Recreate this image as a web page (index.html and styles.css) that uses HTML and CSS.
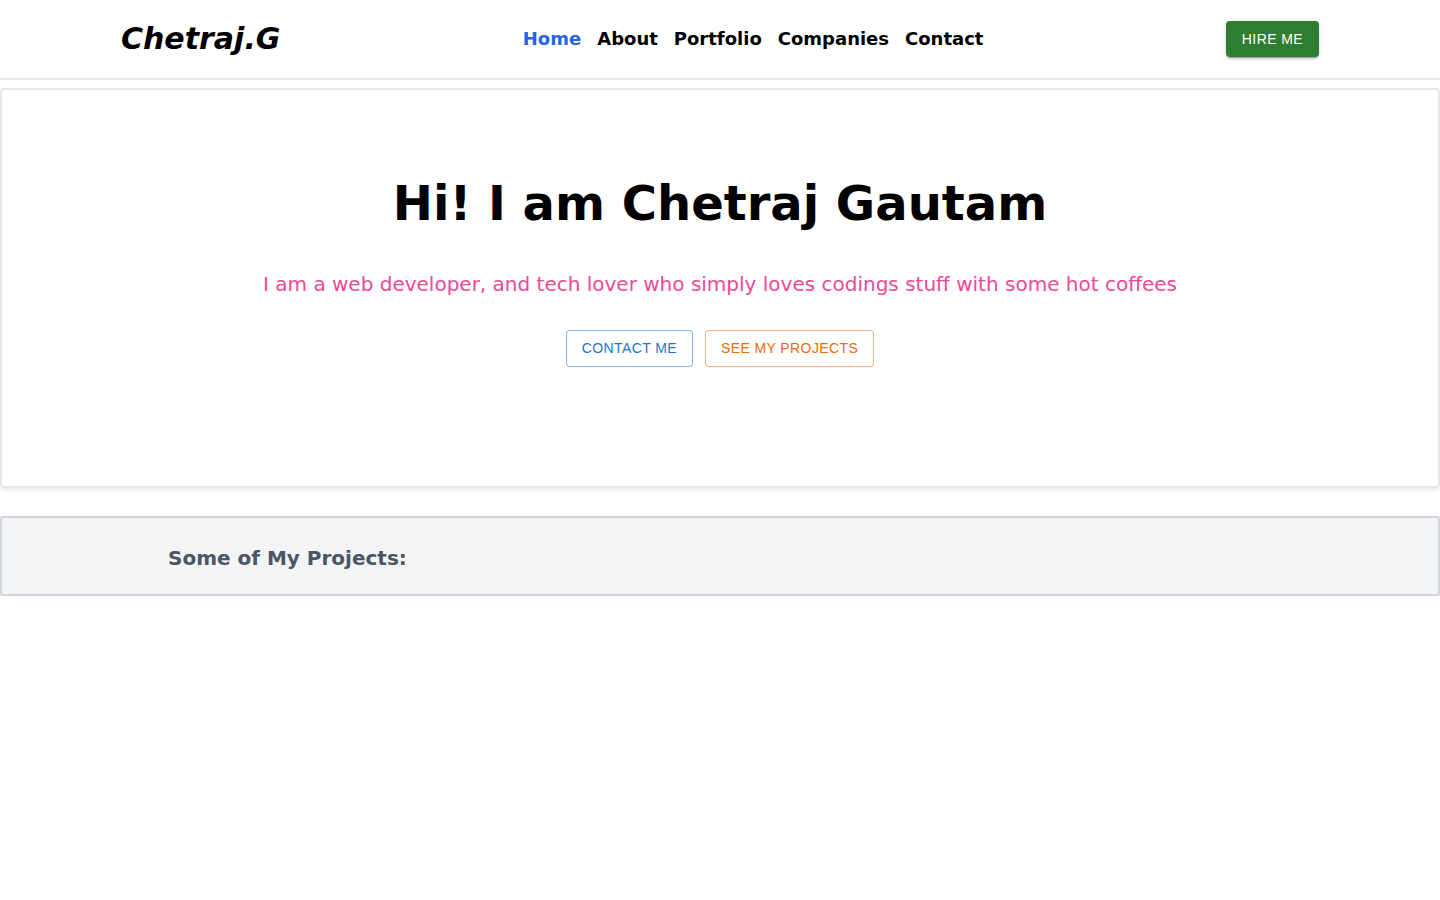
FILE: index.html
```html
<!DOCTYPE html>
<html lang="en">
<head>
<meta charset="utf-8">
<title>Chetraj.G</title>
<link rel="stylesheet" href="styles.css">
</head>
<body>
<header class="topbar">
  <div class="topbar-inner">
    <a class="logo" href="#">Chetraj.G</a>
    <nav class="nav">
      <a class="nav-link active" href="#">Home</a>
      <a class="nav-link" href="#">About</a>
      <a class="nav-link" href="#">Portfolio</a>
      <a class="nav-link" href="#">Companies</a>
      <a class="nav-link" href="#">Contact</a>
    </nav>
    <button class="btn-hire">HIRE ME</button>
  </div>
</header>
<main>
  <section class="hero">
    <h1 class="hero-title">Hi! I am Chetraj Gautam</h1>
    <p class="hero-sub">I am a web developer, and tech lover who simply loves codings stuff with some hot coffees</p>
    <div class="hero-actions">
      <button class="btn-outline btn-blue">CONTACT ME</button>
      <button class="btn-outline btn-orange">SEE MY PROJECTS</button>
    </div>
  </section>
  <section class="projects">
    <h2 class="projects-title">Some of My Projects:</h2>
  </section>
</main>
</body>
</html>
```
FILE: styles.css
```css
* { box-sizing: border-box; }
html, body { margin: 0; padding: 0; background: #fff; }
body { font-family: "DejaVu Sans", sans-serif; color: #000; }

.topbar {
  border-bottom: 2px solid #e5e7eb;
}
.topbar-inner {
  width: 1198px;
  margin: 0 auto;
  height: 78px;
  display: flex;
  align-items: center;
  justify-content: space-between;
}
.logo {
  font-size: 30px;
  font-weight: 700;
  font-style: italic;
  color: #000;
  text-decoration: none;
  margin-bottom: 2px;
}
.nav { display: flex; gap: 16px; margin-bottom: 2px; }
.nav-link {
  font-size: 18px;
  font-weight: 700;
  color: #000;
  text-decoration: none;
}
.nav-link.active { color: #2563eb; }

.btn-hire {
  font-family: "Liberation Sans", Arial, sans-serif;
  font-size: 14px;
  letter-spacing: 0.4px;
  color: #fff;
  background: #2e7d32;
  border: none;
  border-radius: 4px;
  height: 36px;
  padding: 0 16px;
  box-shadow: 0 3px 1px -2px rgba(0,0,0,.2), 0 2px 2px 0 rgba(0,0,0,.14), 0 1px 5px 0 rgba(0,0,0,.12);
}

main { padding-top: 8px; }
.hero {
  height: 400px;
  border: 2px solid #e5e7eb;
  border-radius: 4px;
  box-shadow: 0 2px 4px rgba(0,0,0,0.08);
  display: flex;
  flex-direction: column;
  align-items: center;
  padding-top: 89px;
}
.hero-title {
  margin: 0;
  font-size: 48px;
  line-height: 1;
  font-weight: 700;
}
.hero-sub {
  margin: 43px 0 0;
  font-size: 20px;
  line-height: 28px;
  color: #ec4899;
}
.hero-actions {
  margin-top: 32px;
  display: flex;
  gap: 12px;
}
.btn-outline {
  font-family: "Liberation Sans", Arial, sans-serif;
  font-size: 14px;
  letter-spacing: 0.4px;
  background: #fff;
  height: 37px;
  padding: 0 15px 1px;
  border-radius: 4px;
}
.btn-blue { color: #1976d2; border: 1px solid rgba(25,118,210,0.5); }
.btn-orange { color: #ed6c02; border: 1px solid rgba(237,108,2,0.5); }

.projects {
  margin: 28px 0 0;
  height: 80px;
  background: #f3f4f6;
  border: 2px solid #d1d5db;
  border-radius: 3px;
  box-shadow: 0 4px 6px -1px rgba(0,0,0,.1), 0 2px 4px -1px rgba(0,0,0,.06);
  display: flex;
  align-items: center;
  padding-left: 166px;
  padding-top: 3px;
}
.projects-title {
  margin: 0;
  font-size: 20px;
  font-weight: 700;
  color: #4b5563;
}
```
